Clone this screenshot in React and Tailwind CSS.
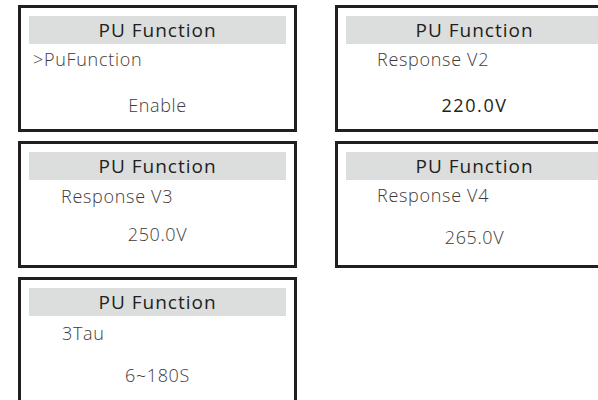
import React from "react";

const font = { fontFamily: '"Open Sans", "DejaVu Sans", sans-serif' };

function Box({ label, value, labelPad, labelMt = "mt-px", valueMt, strongValue }) {
  return (
    <div className="h-[127px] border-[3px] border-[#231f20] px-[8px] pt-[8px] bg-white">
      <div className="h-[28px] bg-[#dcdddd] flex items-center justify-center text-[19px] font-medium text-[#231f20] tracking-[1px]">
        PU Function
      </div>
      <div className={`leading-[28px] text-[18px] font-light text-[#3e3a39] tracking-[0.7px] ${labelMt} ${labelPad}`}>
        {label}
      </div>
      <div
        className={`leading-[28px] text-center text-[18px] ${valueMt} ${
          strongValue ? "font-normal text-[#231f20] tracking-[1.6px]" : "font-light text-[#3e3a39] tracking-[0.6px]"
        }`}
      >
        {value}
      </div>
    </div>
  );
}

export default function App() {
  return (
    <div className="w-[598px] h-[400px] overflow-hidden bg-white pt-[5px] pl-[18px]" style={font}>
      <div className="grid grid-cols-[279px_279px] gap-x-[38px] gap-y-[9px] w-[596px]">
        <Box label=">PuFunction" value="Enable" labelPad="pl-[4px]" valueMt="mt-[18px]" />
        <Box label="Response V2" value="220.0V" labelPad="pl-[31px]" valueMt="mt-[18px]" strongValue />
        <Box label="Response V3" value="250.0V" labelPad="pl-[32px]" labelMt="mt-[2px]" valueMt="mt-[10px]" />
        <Box label="Response V4" value="265.0V" labelPad="pl-[31px]" valueMt="mt-[14px]" />
        <Box label="3Tau" value="6~180S" labelPad="pl-[33px]" labelMt="mt-[3px]" valueMt="mt-[14px]" />
      </div>
    </div>
  );
}
